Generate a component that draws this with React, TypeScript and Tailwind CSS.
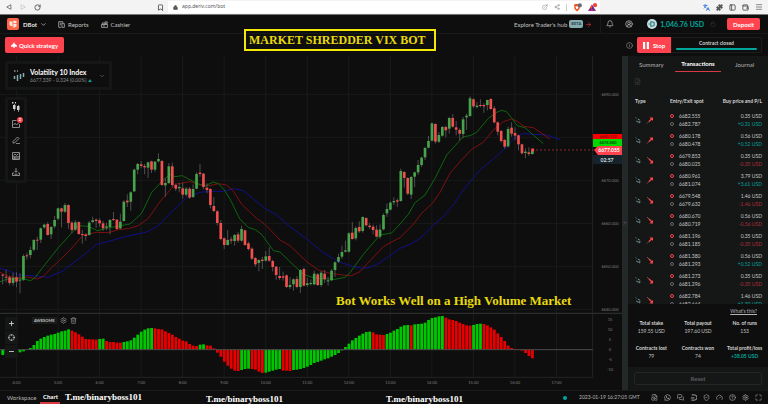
import type { ReactNode } from 'react';
import {
  ArrowRight,
  Bell,
  Bookmark,
  ChevronDown,
  ChevronsRight,
  CircleHelp,
  CircleUserRound,
  Crosshair,
  ExternalLink,
  FileClock,
  FileDown,
  FileText,
  Gauge,
  Info,
  Languages,
  Lock,
  Maximize,
  Menu,
  MessagesSquare,
  Minus,
  PanelLeft,
  Plus,
  Puzzle,
  RotateCw,
  Settings,
  Share2,
  ShieldCheck,
  Trash2,
  Wallet,
} from 'lucide-react';
import { FaWhatsapp } from 'react-icons/fa';

type Candle = [open: number, close: number, high: number, low: number];

// Plot units: three per pixel, y grows downwards
const CANDLES: Candle[] = [
  [569, 572, 567, 598], [575, 578, 555, 592], [577, 594, 572, 601], [594, 578, 563, 602],
  [577, 590, 562, 607], [587, 584, 565, 625], [584, 513, 508, 588], [511, 514, 503, 524],
  [510, 495, 485, 520], [494, 465, 462, 499], [464, 467, 455, 495], [464, 430, 427, 474],
  [427, 419, 416, 432], [417, 450, 411, 452], [448, 426, 423, 462], [424, 405, 393, 430],
  [401, 370, 368, 406], [370, 380, 368, 427], [380, 360, 354, 384], [360, 414, 358, 431],
  [413, 435, 408, 445], [434, 412, 405, 437], [411, 447, 409, 449], [447, 450, 435, 476],
  [449, 453, 445, 467], [450, 413, 408, 452], [411, 406, 395, 414], [404, 408, 400, 429],
  [406, 415, 400, 425], [415, 430, 408, 438], [428, 424, 413, 436], [426, 405, 402, 448],
  [402, 405, 381, 408], [404, 432, 402, 434], [430, 410, 386, 433], [408, 350, 346, 410],
  [347, 352, 328, 366], [350, 322, 319, 377], [319, 254, 251, 321], [254, 237, 234, 268],
  [238, 243, 228, 250], [243, 247, 237, 268], [248, 232, 230, 279], [229, 254, 227, 264],
  [254, 230, 228, 260], [229, 222, 205, 232], [228, 300, 225, 302], [301, 294, 280, 335],
  [294, 244, 234, 297], [244, 300, 233, 306], [300, 311, 296, 318], [310, 306, 293, 322],
  [310, 329, 293, 341], [329, 311, 306, 334], [311, 338, 306, 341], [336, 312, 298, 339],
  [311, 267, 262, 313], [263, 267, 236, 275], [266, 306, 264, 313], [308, 315, 295, 325],
  [312, 360, 309, 370], [363, 378, 336, 382], [379, 414, 375, 421], [414, 462, 405, 466],
  [460, 480, 457, 492], [480, 465, 435, 482], [463, 467, 455, 477], [468, 450, 447, 482],
  [448, 467, 441, 473], [467, 432, 422, 470], [436, 480, 434, 482], [475, 492, 470, 496],
  [491, 521, 487, 525], [519, 538, 516, 545], [534, 525, 523, 559], [524, 528, 516, 552],
  [527, 514, 498, 530], [513, 527, 487, 531], [528, 546, 524, 559], [545, 570, 543, 584],
  [573, 579, 546, 585], [574, 578, 560, 587], [571, 606, 568, 609], [606, 600, 577, 612],
  [598, 583, 580, 617], [582, 606, 573, 610], [606, 555, 552, 624], [552, 602, 548, 604],
  [600, 595, 578, 606], [597, 594, 583, 602], [598, 566, 557, 601], [568, 600, 564, 603],
  [600, 563, 558, 606], [566, 583, 555, 594], [589, 586, 575, 602], [586, 557, 552, 588],
  [555, 532, 529, 576], [530, 516, 506, 534], [515, 501, 482, 522], [500, 496, 467, 502],
  [500, 445, 442, 503], [443, 462, 411, 464], [460, 429, 424, 466], [426, 439, 409, 444],
  [438, 396, 394, 443], [399, 421, 397, 424], [422, 426, 414, 432], [425, 435, 419, 448],
  [434, 455, 421, 457], [455, 434, 418, 461], [433, 390, 385, 436], [385, 372, 355, 396],
  [374, 353, 349, 376], [352, 348, 337, 360], [346, 350, 340, 366], [348, 258, 251, 350],
  [261, 279, 259, 308], [279, 326, 277, 330], [329, 276, 273, 342], [275, 262, 260, 306],
  [262, 240, 225, 270], [240, 218, 215, 246], [217, 189, 185, 225], [188, 168, 153, 190],
  [167, 115, 112, 170], [117, 170, 115, 176], [170, 150, 141, 174], [152, 126, 123, 155],
  [126, 136, 122, 157], [131, 99, 96, 146], [99, 125, 87, 128], [127, 134, 108, 151],
  [135, 146, 130, 166], [147, 103, 96, 160], [97, 92, 86, 135], [93, 40, 34, 96],
  [43, 64, 40, 70], [66, 62, 51, 71], [60, 63, 43, 67], [60, 64, 55, 84],
  [60, 45, 44, 76], [42, 72, 40, 74], [70, 112, 63, 115], [112, 140, 109, 151],
  [138, 168, 135, 173], [165, 185, 162, 191], [184, 132, 125, 188], [128, 146, 112, 155],
  [144, 152, 127, 165], [151, 178, 149, 196], [178, 205, 176, 208], [204, 200, 190, 220],
  [202, 207, 187, 213], [207, 197, 190, 209],
];

// Awesome oscillator, a bar is green when it is above the one before
const AWESOME = [
  -16, -12, -14, -12, -10, -8, -5, 0, 5, 14, 26, 33, 38, 42, 45, 47, 51, 55, 57, 61,
  57, 52, 46, 39, 32, 31, 31, 30, 32, 33, 26, 23, 23, 21, 21, 23, 25, 28, 36, 45,
  54, 60, 64, 65, 64, 62, 61, 55, 50, 45, 38, 33, 27, 25, 17, 12, 11, 15, 16, 13,
  12, 4, -9, -21, -36, -48, -57, -63, -64, -61, -58, -57, -58, -60, -66, -70, -69, -66, -63, -60,
  -58, -63, -63, -64, -61, -60, -58, -55, -51, -46, -40, -37, -33, -29, -26, -21, -16, -10, -2, 8,
  18, 28, 35, 42, 48, 53, 54, 52, 46, 45, 44, 47, 51, 57, 62, 69, 73, 74, 73, 76,
  77, 78, 81, 89, 95, 97, 100, 101, 96, 91, 89, 86, 81, 77, 73, 72, 74, 77, 78, 77,
  73, 67, 60, 49, 38, 26, 12, 5, 2, -1, -3, -10, -19, -26,
];

const GREEN_LINE =
  '0,590 20,583 50,580 75,583 92,587 105,578 130,545 175,488 205,455 235,422 265,424 292,437 320,430 350,424 390,417 425,385 455,322 485,290 510,268 525,275 547,272 590,295 615,303 640,291 655,296 673,315 690,342 720,403 745,427 767,435 785,448 820,497 840,501 870,530 910,568 940,578 970,581 1005,583 1035,577 1050,563 1090,508 1140,450 1175,444 1200,417 1225,388 1245,353 1275,330 1305,280 1340,210 1390,155 1410,152 1430,142 1465,100 1490,82 1505,76 1520,80 1552,122 1575,128 1600,150 1630,176';
const RED_LINE =
  '0,562 25,574 60,579 85,576 112,582 130,574 155,548 205,501 250,450 290,442 325,443 355,434 385,431 415,422 445,400 480,350 525,298 570,290 595,299 625,303 655,296 680,300 700,318 725,358 770,400 795,418 840,465 870,482 920,530 955,555 990,565 1035,571 1055,572 1080,560 1110,527 1150,485 1175,471 1200,458 1240,418 1265,385 1297,355 1320,322 1350,265 1380,230 1415,193 1450,172 1480,135 1510,110 1535,102 1550,108 1572,124 1600,128 1650,162';
const BLUE_LINE =
  '0,551 25,556 55,570 100,572 145,577 190,557 240,518 290,478 330,468 380,454 440,441 475,422 510,385 560,337 600,322 630,319 670,319 700,311 730,317 760,342 795,370 830,390 870,425 920,462 965,500 1015,530 1060,545 1090,550 1110,547 1140,533 1170,512 1200,490 1230,478 1260,460 1280,442 1300,420 1330,395 1360,360 1390,315 1420,278 1445,250 1480,222 1510,195 1545,157 1570,146 1600,148 1640,150 1680,164';

const PRICES = ['6690.000', '6680.000', '6670.000', '6660.000', '6650.000', '6640.000'];
const HOURS = Array.from({ length: 14 }, (_, i) => `${i + 4}:00`);

const TRANSACTIONS = [
  { entry: '6682.555', exit: '6682.787', price: '0.35', pl: '+0.31', rise: true },
  { entry: '6680.178', exit: '6680.478', price: '0.56', pl: '+0.52', rise: true },
  { entry: '6679.853', exit: '6680.025', price: '0.35', pl: '-0.35', rise: false },
  { entry: '6680.961', exit: '6681.074', price: '3.79', pl: '+3.61', rise: true },
  { entry: '6679.548', exit: '6679.632', price: '1.46', pl: '-1.46', rise: false },
  { entry: '6680.670', exit: '6680.719', price: '0.56', pl: '-0.56', rise: false },
  { entry: '6681.196', exit: '6681.185', price: '0.35', pl: '-0.35', rise: true },
  { entry: '6681.380', exit: '6681.293', price: '0.56', pl: '+0.52', rise: false },
  { entry: '6681.273', exit: '6681.296', price: '0.35', pl: '-0.35', rise: false },
  { entry: '6682.784', exit: '6682.664', price: '1.46', pl: '+1.39', rise: false },
];

const TOTALS = [
  { label: 'Total stake', value: '159.55 USD' },
  { label: 'Total payout', value: '197.60 USD' },
  { label: 'No. of runs', value: '153' },
  { label: 'Contracts lost', value: '79' },
  { label: 'Contracts won', value: '74' },
  { label: 'Total profit/loss', value: '+38.05 USD', profit: true },
];

function IconButton({ label, children }: { label: string; children: ReactNode }) {
  return (
    <button aria-label={label} className="flex shrink-0 items-center justify-center">
      {children}
    </button>
  );
}

function BrowserBar() {
  return (
    <div className="flex h-[15px] items-center border-b border-[#777] bg-[#f3f3f3] text-[#555]">
      <div className="flex w-[168px] shrink-0 items-center gap-2 pr-1 pl-[6px]">
        <IconButton label="Back">
          <svg viewBox="0 0 8 8" className="size-[6px]" fill="none" stroke="currentColor">
            <path d="M6.5 1v6L1 4z" />
          </svg>
        </IconButton>
        <IconButton label="Forward">
          <svg viewBox="0 0 8 8" className="size-[6px]" fill="none" stroke="#c4c4c4">
            <path d="M1.5 1v6L7 4z" />
          </svg>
        </IconButton>
        <IconButton label="Reload">
          <RotateCw className="size-[7px]" strokeWidth={3} />
        </IconButton>
        <span className="flex-1" />
        <IconButton label="Bookmark">
          <Bookmark className="size-[7px]" strokeWidth={3} />
        </IconButton>
      </div>
      <div className="flex h-3 flex-1 items-center bg-white pl-[5px]">
        <Lock className="size-[5px]" fill="currentColor" strokeWidth={3} />
        <input
          aria-label="Address"
          defaultValue="app.deriv.com/bot"
          className="ml-1 min-w-0 flex-1 font-['Noto_Sans',sans-serif] text-[5px] text-[#555] outline-none"
        />
        <div className="flex items-center gap-[6px] pr-[3px]">
          <IconButton label="Open">
            <ExternalLink className="size-[6px] text-[#888]" />
          </IconButton>
          <IconButton label="Share">
            <Share2 className="size-[6px] text-[#888]" />
          </IconButton>
          <span className="h-[7px] w-px bg-[#ccc]" />
          <IconButton label="Shields">
            <svg viewBox="0 0 9 9" className="size-[9px]">
              <path d="M1 2l1-1h4l1 1-.5 4L4 8.500 1.500 6z" fill="#f4511e" />
              <path d="M2.500 3l1.500.6L5.500 3 5 5.500 4 6.200 3 5.500z" fill="#fff" />
              <circle cx="6.800" cy="2.400" r="2.100" fill="#666b78" />
            </svg>
          </IconButton>
          <IconButton label="Rewards">
            <svg viewBox="0 0 9 9" className="size-[9px]">
              <path d="M4 1.500L8 8H0z" fill="#662d91" />
              <path d="M4 1.500L2 4.800 4 6z" fill="#ff4724" />
              <path d="M0 8h8L4 6z" fill="#b0307c" />
              <circle cx="7" cy="2.200" r="2.100" fill="#f4473a" />
            </svg>
          </IconButton>
        </div>
      </div>
      <div className="flex w-[168px] shrink-0 items-center justify-end gap-[6px] pr-[5px]">
        <IconButton label="Translate">
          <Languages className="size-[7px] text-[#3d7de0]" strokeWidth={3} />
        </IconButton>
        <IconButton label="Extensions">
          <Puzzle className="size-[7px]" fill="currentColor" />
        </IconButton>
        <IconButton label="Sidebar">
          <PanelLeft className="size-[7px]" strokeWidth={3} />
        </IconButton>
        <IconButton label="Wallet">
          <Wallet className="size-[7px]" strokeWidth={3} />
        </IconButton>
        <IconButton label="Menu">
          <Menu className="size-[8px]" />
        </IconButton>
      </div>
    </div>
  );
}

function Header() {
  return (
    <header className="flex h-[19px] items-center border-b border-[#181a1a] pr-2 pl-[7px] text-[6px] text-[#c2c2c2]">
      <svg viewBox="0 0 12 12" className="size-3">
        <rect width="12" height="12" rx="2" fill="#ff6444" />
        <path d="M2.500 3.500h3v5l-2-.7-1-1zM6.300 2.500l3.200.6v2.200H6.300zM6.300 6h3.200v2.700l-3.200 1z" fill="#fff" opacity=".85" />
      </svg>
      <button className="ml-1 flex items-center gap-[3px] font-bold text-[#e4e4e4]">
        DBot <ChevronDown className="size-[7px]" />
      </button>
      <a href="#reports" className="ml-[11px] flex items-center gap-[3px]">
        <svg viewBox="0 0 8 8" className="size-[7px]" fill="none" stroke="currentColor" strokeWidth=".8">
          <path d="M5.500 2.500V.800H.800v6.400h3M2 2.500h2.200M2 4.200h1.500" />
          <path d="M4.500 3h2.800v4.200H4.500z" />
        </svg>
        Reports
      </a>
      <a href="#cashier" className="ml-3 flex items-center gap-[3px]">
        <svg viewBox="0 0 8 8" className="size-[7px]" fill="none" stroke="currentColor" strokeWidth=".8">
          <path d="M.5 4h7v3.300h-7zM1.500 4V2.200h2.200V4M4.500 1h2.700v1.700H4.500zM5.800 2.700V4M2 5.600h2.500" />
        </svg>
        Cashier
      </a>
      <span className="flex-1" />
      <a href="#hub" className="flex items-center gap-[2px]">
        Explore Trader's hub
        <span className="flex h-2 w-[14px] items-center justify-center rounded-xs bg-[#85acb0] text-[4px] font-bold text-[#274044]">
          BETA
        </span>
        <ArrowRight className="size-[7px] text-[#e03a44]" />
      </a>
      <span className="ml-2 h-[19px] w-px bg-[#181a1a]" />
      <div className="ml-[5px] flex items-center gap-[11px]">
        <IconButton label="Notifications">
          <Bell className="size-2" />
        </IconButton>
        <IconButton label="Account">
          <CircleUserRound className="size-2" />
        </IconButton>
      </div>
      <button className="ml-[14px] flex items-center gap-[3px] text-[7px] font-bold text-[#00a79e]">
        <svg viewBox="0 0 10 10" className="size-[10px]">
          <circle cx="5" cy="5" r="5" fill="#c5dee0" />
          <path d="M3.800 2.800h1.400a2.200 2.200 0 010 4.400H3.800zM1.500 5h2.300" fill="none" stroke="#3e8289" strokeWidth="1.200" />
        </svg>
        1,046.76 USD
      </button>
      <Lock className="ml-[6px] size-[6px] text-[#383838]" />
      <button className="ml-[11px] h-3 w-[33px] rounded-xs bg-[#ff444f] text-[6px] font-bold text-white">
        Deposit
      </button>
    </header>
  );
}

function ControlBar() {
  return (
    <div className="flex h-[22px] items-center pr-[6px] pl-[5px]">
      <button className="flex h-4 w-[59px] items-center justify-center gap-[2px] rounded-xs bg-[#ff444f] text-[6px] font-bold text-white">
        <svg viewBox="0 0 7 7" className="size-[6px]" fill="currentColor">
          <path d="M3.500 0l1.200 2.200L7 4.200v1.300H4.200V7H2.800V5.500H0V4.200l2.300-2z" />
        </svg>
        Quick strategy
      </button>
      <span className="flex-1" />
      <Info className="size-[7px] text-[#999]" />
      <button className="ml-[4px] flex h-4 w-[34px] items-center justify-center gap-1 rounded-l-xs bg-[#ff444f] text-[6px] font-bold text-white">
        <svg viewBox="0 0 6 7" className="h-[7px] w-[6px]" fill="currentColor">
          <path d="M0 0h2.200v7H0zM3.800 0H6v7H3.800z" />
        </svg>
        Stop
      </button>
      <div className="flex h-4 w-[91px] flex-col items-center justify-between rounded-r-xs border border-[#1c1e1e] px-1 pt-[2px] pb-[2px] text-[5px] leading-[7px] font-bold text-[#d0d0d0]">
        Contract closed
        <span className="h-[2px] w-full rounded-full bg-[#00a79e]" />
      </div>
    </div>
  );
}

function PriceChart() {
  return (
    <svg viewBox="0 0 622 334" className="block w-full" fontSize="4" textAnchor="middle">
      <g transform="translate(0 29) scale(.33333)" fill="none">
        <g stroke="#191b1b" strokeWidth="3">
          {HOURS.map((hour, i) => (
            <path key={hour} d={`M${49.5 + i * 124.6} -87V877`} />
          ))}
          {PRICES.map((price, i) => (
            <path key={price} d={`M0 ${28 + i * 129}H1776`} />
          ))}
          <path d="M1778 -87V877M0 877H1778" stroke="#232525" />
        </g>
        <path d="M0 685H1866" stroke="#2b2d2d" strokeWidth="4" />

        {AWESOME.map((value, i) => (
          <rect
            key={i}
            x={4 + i * 10.386}
            y={value > 0 ? 794 - value : 794}
            width="8.400"
            height={Math.abs(value)}
            fill={i > 0 && value <= AWESOME[i - 1] ? '#e60000' : '#00c800'}
          />
        ))}
        <path d="M0 794H1778" stroke="#4b4b4b" strokeWidth="3" />

        <g strokeWidth="3" strokeLinejoin="round">
          <polyline points={BLUE_LINE} stroke="#10108a" />
          <polyline points={RED_LINE} stroke="#7e1010" />
          <polyline points={GREEN_LINE} stroke="#0d660d" />
        </g>
        {CANDLES.map(([open, close, high, low], i) => {
          const x = 8 + i * 10.386;
          return (
            <g key={i}>
              <path d={`M${x} ${high}V${low}`} stroke="#5c5c5c" strokeWidth="2.500" />
              <rect
                x={x - 4}
                y={Math.min(open, close)}
                width="8"
                height={Math.max(3, Math.abs(open - close))}
                fill={close < open ? '#48a44c' : '#f04f4f'}
              />
            </g>
          );
        })}
        <circle cx="1598" cy="195" r="5" fill="#ff444f" />
        <path d="M1608 195H1780" stroke="#8b2a30" strokeWidth="3" strokeDasharray="6 6" />
      </g>

      <g fill="#7d7d7d">
        {PRICES.filter((price) => price !== '6680.000').map((price) => (
          <text key={price} x="610" y={40 + PRICES.indexOf(price) * 43}>{price}</text>
        ))}
        {[15, 10, 5, 0, -5, -10].map((level, i) => (
          <text key={level} x="610" y={265 + i * 10}>{level}</text>
        ))}
        {HOURS.map((hour, i) => (
          <text key={hour} x={16.5 + i * 41.54} y="328">{hour}</text>
        ))}
      </g>
      <path d="M593 78h29v6h-29z" fill="#fa0000" />
      <text x="608" y="82" fill="#8f0000" fontWeight="bold">6680.159</text>
      <path d="M593 83h29v8h-29z" fill="#00d800" />
      <text x="608" y="88" fill="#004d00" fontWeight="bold">6678.880</text>
      <path d="M594 94l4-4h24v9h-24z" fill="#ff444f" />
      <text x="609" y="96" fill="#fff" fontSize="5" fontWeight="bold">6677.055</text>
      <path d="M593 99h29v9h-29z" fill="#16232d" />
      <text x="607" y="106" fill="#d5dade" fontSize="5" fontWeight="bold">02:57</text>
    </svg>
  );
}

function MarketSelector() {
  return (
    <button className="absolute top-[5px] left-[5px] flex h-[29px] w-[107px] items-center rounded-xs border-3 border-[#151717] bg-[#0e0e0e] pr-1 pl-[5px] text-left">
      <svg viewBox="0 0 12 12" className="size-3" stroke="#85acb0">
        <path d="M1.500 6v3M4.500 5v6M7.500 4v5M10.500 3v4" strokeWidth="1.500" />
        <path d="M1 1h1.500M4 1h1" stroke="#ddd" />
      </svg>
      <span className="ml-[5px] flex flex-1 flex-col gap-[1px]">
        <span className="text-[7px] leading-[8px] font-bold text-white">Volatility 10 Index</span>
        <span className="flex items-center gap-[1px] text-[5px] leading-[7px] text-[#8a8a8a]">
          6677.339 - 0.324 (0.00%)
          <svg viewBox="0 0 5 4" className="h-[3px] w-1">
            <path d="M2.500 0L5 4H0z" fill="#00a79e" />
          </svg>
        </span>
      </span>
      <ChevronDown className="size-[6px] text-[#888]" />
    </button>
  );
}

function ChartTools() {
  return (
    <div className="absolute top-[41px] left-[5px] flex w-[22px] flex-col items-center gap-2 rounded-xs border-3 border-[#151717] bg-[#0e0e0e] pt-[2px] pb-1 text-[#a8a8a8]">
      <IconButton label="Chart type">
        <svg viewBox="0 0 10 10" className="size-[10px]" fill="#d5d5d5">
          <path d="M1 0h1.500v1.500H1zM4 0h1v1.500H4zM2 3h2.500v4H2zM3 2h.6v7H3zM6 4h2.500v4H6zM7 3h.6v7H7z" />
        </svg>
      </IconButton>
      <button aria-label="Indicators" className="relative">
        <svg viewBox="0 0 8 8" className="size-2" fill="none" stroke="currentColor" strokeWidth=".8">
          <path d="M4.500.500H.500v7h7V4M1.500 5l1.500-1.800L4.500 5l2-2" />
        </svg>
        <span className="absolute -top-[3px] -right-[3px] flex size-[6px] items-center justify-center rounded-full bg-[#ff444f] text-[4px] font-bold text-white">
          2
        </span>
      </button>
      <IconButton label="Drawing tools">
        <svg viewBox="0 0 8 8" className="size-2" fill="none" stroke="currentColor" strokeWidth=".8">
          <path d="M1 5.500L5.500 1 7 2.500 2.500 7H1zM4 7.600h4" />
        </svg>
      </IconButton>
      <IconButton label="Templates">
        <svg viewBox="0 0 8 8" className="size-2" fill="none" stroke="currentColor" strokeWidth=".8">
          <path d="M.5.500h7v7h-7zM.5 4.800h7M2.800 4.800v2.700M.5 6.200h7M1.500 3.500L3 2l1.500 1.300L6.500 1.800" />
        </svg>
      </IconButton>
      <IconButton label="Download">
        <svg viewBox="0 0 8 8" className="size-2" fill="none" stroke="currentColor" strokeWidth=".8">
          <path d="M4 0v4M2.500 2.800L4 4.300l1.500-1.500M2 5H.500v2.500h7V5H6M2.500 6.200h3" />
        </svg>
      </IconButton>
    </div>
  );
}

function ZoomControls() {
  return (
    <div className="absolute bottom-8 left-[5px] flex flex-col gap-[1px] text-[#d5d5d5]">
      <button aria-label="Zoom in" className="flex size-[13px] items-center justify-center bg-[#151717]">
        <Plus className="size-[7px]" strokeWidth={3} />
      </button>
      <button aria-label="Centre" className="flex size-[13px] items-center justify-center bg-[#151717]">
        <Crosshair className="size-[7px]" />
      </button>
      <button aria-label="Zoom out" className="flex size-[13px] items-center justify-center bg-[#151717]">
        <Minus className="size-[7px]" strokeWidth={3} />
      </button>
    </div>
  );
}

function TypeIcons({ rise }: { rise: boolean }) {
  return (
    <svg viewBox="0 0 20 10" className="h-[10px] w-5" fill="none">
      <path d="M.8 2.500l1 1M1.200 6l2 1.200 2-1.600M3 4.500h1.500M4 8l1.500-1" stroke="#6f8f93" />
      {rise ? (
        <g stroke="#ff444f">
          <path d="M12 8.500l3-3" stroke="#7c4a4d" />
          <path d="M14 6.500l3-3" strokeWidth="1.200" />
          <path d="M14.500 2.500h3.500v3.500z" fill="#ff444f" stroke="none" />
        </g>
      ) : (
        <g stroke="#ff444f">
          <path d="M12 2l3 3" stroke="#7c4a4d" />
          <path d="M14 4l3 3" strokeWidth="1.200" />
          <path d="M14.500 8.500h3.500v-3.500z" fill="#ff444f" stroke="none" />
        </g>
      )}
    </svg>
  );
}

function TransactionTable() {
  return (
    <div className="h-[213px] shrink-0 overflow-hidden pt-[6px] pr-[6px] pl-[7px]">
      <table className="w-full text-[5px] leading-[8px] text-[#c6c6c6]">
        <thead className="text-[#d5d5d5]">
          <tr className="h-[13px] align-top">
            <th className="w-[35px] text-left">Type</th>
            <th className="text-left">Entry/Exit spot</th>
            <th className="text-right">Buy price and P/L</th>
          </tr>
        </thead>
        <tbody>
          {TRANSACTIONS.map((t) => (
            <tr key={t.entry} className="h-5">
              <td className="p-0">
                <TypeIcons rise={t.rise} />
              </td>
              <td className="p-0">
                <div className="flex items-center gap-[5px]">
                  <span className="size-1 rounded-full border border-[#ff444f]" />
                  {t.entry}
                </div>
                <div className="flex items-center gap-[5px]">
                  <span className="size-1 rounded-full border border-[#686868]" />
                  {t.exit}
                </div>
              </td>
              <td className="p-0 text-right">
                <div>{t.price} USD</div>
                <div className={t.pl.startsWith('+') ? 'text-[#00a098]' : 'text-[#ab2e39]'}>{t.pl} USD</div>
              </td>
            </tr>
          ))}
        </tbody>
      </table>
    </div>
  );
}

function RunPanel() {
  return (
    <aside className="flex w-[140px] shrink-0 flex-col bg-[#151717]">
      <div role="tablist" className="grid h-4 shrink-0 grid-cols-3 text-[6px] text-[#b5b5b5]">
        <button role="tab">Summary</button>
        <button role="tab" aria-selected className="border-b border-[#d83a44] font-bold text-white">
          Transactions
        </button>
        <button role="tab">Journal</button>
      </div>
      <div className="flex h-[19px] shrink-0 items-center pl-[6px] text-[#444]">
        <IconButton label="Download transactions">
          <FileDown className="size-[7px]" />
        </IconButton>
      </div>
      <TransactionTable />
      <div className="flex flex-1 flex-col bg-[#0e0e0e] pt-1 text-[5px] leading-[8px]">
        <a href="#help" className="mr-[11px] self-end leading-[7px] text-[#b5b5b5] underline">
          What's this?
        </a>
        <dl className="mt-1 grid grid-cols-3 gap-y-[9px] text-center">
          {TOTALS.map(({ label, value, profit }) => (
            <div key={label}>
              <dt className="font-bold whitespace-nowrap text-[#d5d5d5]">{label}</dt>
              <dd className={profit ? 'font-bold text-[#00a79e]' : 'text-[#c2c2c2]'}>{value}</dd>
            </div>
          ))}
        </dl>
      </div>
      <div className="flex h-[23px] shrink-0 items-start px-[6px] pt-[5px]">
        <button className="h-[13px] w-full rounded-xs border border-[#242626] text-[6px] font-bold text-[#5c5e5e]">
          Reset
        </button>
      </div>
    </aside>
  );
}

function Footer() {
  return (
    <footer className="relative flex h-[14px] items-center border-t border-[#181a1a] pr-[6px] pl-[7px] text-[6px] text-[#b5b5b5]">
      <button>Workspace</button>
      <button className="ml-1 h-full w-5 border-b-2 border-[#d83a44] font-bold text-white">Chart</button>
      <span className="flex-1" />
      <span className="mr-3 size-1 rounded-full bg-[#00a79e]" />
      <time className="w-[60px] text-[5px] whitespace-nowrap">2023-01-19 16:27:05 GMT</time>
      <div className="ml-3 flex items-center gap-[6px]">
        <IconButton label="Account limits"><FileClock className="size-[7px]" /></IconButton>
        <IconButton label="WhatsApp"><FaWhatsapp className="size-[7px]" /></IconButton>
        <IconButton label="Live chat"><MessagesSquare className="size-[7px]" /></IconButton>
        <IconButton label="Deriv">
          <svg viewBox="0 0 8 8" className="size-[7px]" fill="none" stroke="currentColor">
            <path d="M2 1h3a2.500 2.500 0 010 6H1.500M1 4.500h4" />
          </svg>
        </IconButton>
        <IconButton label="Responsible trading"><ShieldCheck className="size-[7px]" /></IconButton>
        <IconButton label="Network"><Gauge className="size-[7px]" /></IconButton>
        <IconButton label="Help"><CircleHelp className="size-[7px]" /></IconButton>
        <IconButton label="Settings"><Settings className="size-[7px]" /></IconButton>
        <IconButton label="Full screen"><Maximize className="size-[7px]" /></IconButton>
      </div>
      <div className="absolute top-0 left-[65px] font-['Liberation_Serif',serif] text-[9px] leading-[12px] font-bold text-white">
        T.me/binaryboss101
      </div>
      <div className="absolute top-[2px] left-[206px] font-['Liberation_Serif',serif] text-[9px] leading-[12px] font-bold text-white">
        T.me/binaryboss101
      </div>
      <div className="absolute top-[2px] left-[386px] font-['Liberation_Serif',serif] text-[9px] leading-[12px] font-bold text-white">
        T.me/binaryboss101
      </div>
    </footer>
  );
}

export default function App() {
  return (
    <main className="relative flex flex-col bg-[#0e0e0e] font-['Lato',sans-serif]">
      <BrowserBar />
      <Header />
      <ControlBar />
      <div className="flex">
        <section className="relative min-w-0 flex-1">
          <PriceChart />
          <MarketSelector />
          <ChartTools />
          <ZoomControls />
          <div className="absolute bottom-[66px] left-8 flex items-center gap-[3px] text-[#999]">
            <span className="bg-[#1a1c1c] px-[2px] text-[4px] leading-[7px] font-bold text-[#c2c2c2]">AWESOME</span>
            <IconButton label="Indicator settings"><Settings className="size-[7px]" /></IconButton>
            <IconButton label="Remove indicator"><Trash2 className="size-[7px]" /></IconButton>
          </div>
          <p className="absolute bottom-20 left-[336px] font-['Liberation_Serif',serif] text-[13px] leading-[18px] font-bold whitespace-nowrap text-[#e8da0a]">
            Bot Works Well on a High Volume Market
          </p>
        </section>
        <button aria-label="Collapse panel" className="flex w-[6px] shrink-0 items-center justify-center bg-[#232828] text-[#666]">
          <ChevronsRight className="size-[6px]" />
        </button>
        <RunPanel />
      </div>
      <Footer />
      <h1 className="absolute top-[29px] left-[244px] flex h-[22px] w-[192px] items-center border-2 border-[#f5e60a] pl-[3px] font-['Liberation_Serif',serif] text-[12px] font-bold whitespace-nowrap text-[#e8da0a]">
        MARKET SHREDDER VIX BOT
      </h1>
    </main>
  );
}
